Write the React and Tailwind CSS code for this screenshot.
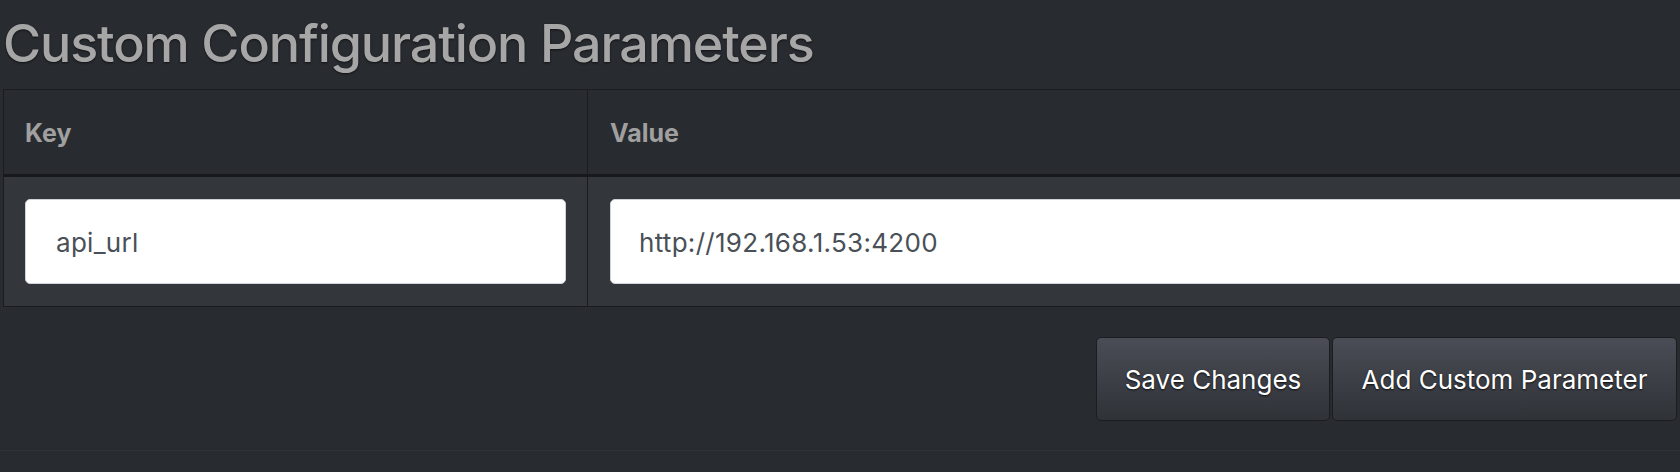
import React from 'react';

const params = [{ key: 'api_url', value: 'http://192.168.1.53:4200' }];

export default function App() {
  return (
    <div className="w-[1680px] h-[472px] overflow-hidden bg-[#282b30] font-['Inter','Noto_Sans',sans-serif]">
      <div className="pl-[3px]">
        <h2 className="pt-[13px] mb-[14px] text-[52px] leading-[62px] font-medium tracking-[-1.1px] text-[#a6a6a6] [text-shadow:0_1px_2px_#111214] whitespace-nowrap">
          Custom Configuration Parameters
        </h2>

        <table className="w-[1800px] border-collapse border border-[#1b1c1f] table-fixed">
          <colgroup>
            <col className="w-[584px]" />
            <col />
          </colgroup>
          <thead>
            <tr className="border-b-[3px] border-[#17181b]">
              <th className="h-[86px] px-[21px] pt-[3px] text-left align-middle text-[25px] font-bold text-[#a0a0a0] border-r border-[#1b1c1f]">Key</th>
              <th className="h-[86px] px-[22px] pt-[3px] text-left align-middle text-[25px] font-bold text-[#a0a0a0]">Value</th>
            </tr>
          </thead>
          <tbody>
            {params.map((p) => (
              <tr key={p.key} className="bg-[#33363b] border-b border-[#1b1c1f]">
                <td className="px-[21px] py-[22px] border-r border-[#1b1c1f]">
                  <input
                    type="text"
                    defaultValue={p.key}
                    className="block w-full h-[85px] rounded-[5px] border border-[#ced4da] bg-white pl-[30px] pt-[2px] text-[26px] tracking-[0.3px] text-[#495057] outline-none"
                  />
                </td>
                <td className="px-[22px] py-[22px]">
                  <input
                    type="text"
                    defaultValue={p.value}
                    className="block w-full h-[85px] rounded-[5px] border border-[#ced4da] bg-white pl-[28px] pt-[2px] text-[26px] tracking-[0.3px] text-[#495057] outline-none"
                  />
                </td>
              </tr>
            ))}
          </tbody>
        </table>
      </div>

      <div className="mt-[30px] flex justify-end gap-[2px] pr-[3px]">
        <button className="w-[234px] h-[84px] rounded-[5px] border border-[#1c1d21] bg-linear-to-b from-[#4a4d55] to-[#2f3237] text-[26px] text-white [text-shadow:0_1px_2px_rgba(0,0,0,0.8)]">
          Save Changes
        </button>
        <button className="w-[345px] h-[84px] rounded-[5px] border border-[#1c1d21] bg-linear-to-b from-[#4a4d55] to-[#2f3237] text-[26px] text-white [text-shadow:0_1px_2px_rgba(0,0,0,0.8)]">
          Add Custom Parameter
        </button>
      </div>

      <div className="mt-[29px] border-t border-[#2f3237]" />
    </div>
  );
}
